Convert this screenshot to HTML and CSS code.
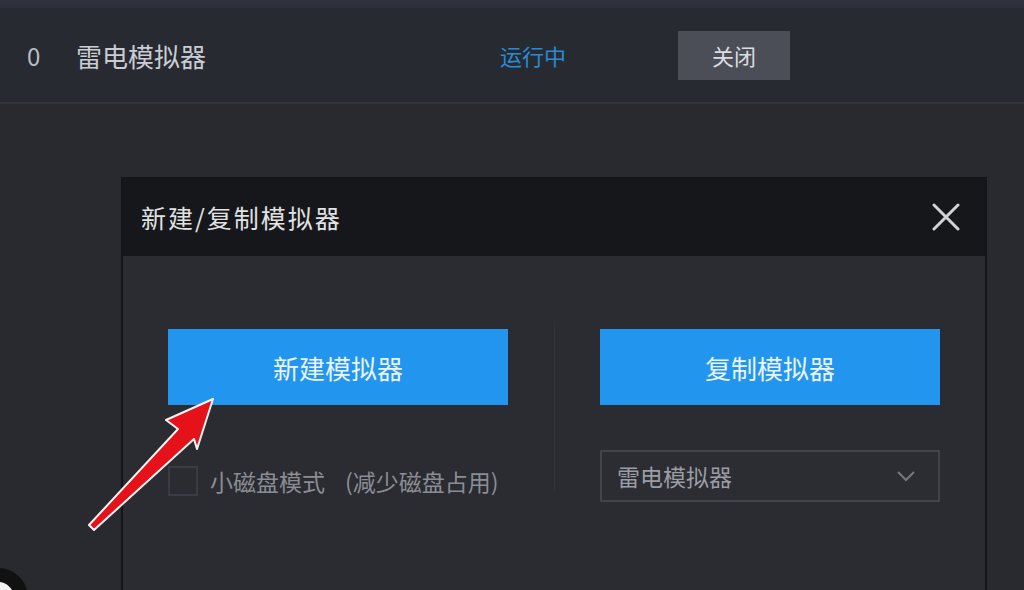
FILE: index.html
```html
<!DOCTYPE html>
<html lang="zh-CN">
<head>
    <meta charset="UTF-8">
    <meta name="viewport" content="width=device-width, initial-scale=1.0">
    <title>多开器</title>

    <link rel="stylesheet" href="styles.css">
</head>
<body>

    <div class="top-strip"></div>

    <div class="sim-row">
        <span class="sim-index">0</span>
        <span class="sim-name">雷电模拟器</span>
        <span class="sim-status">运行中</span>
        <div class="btn-close">关闭</div>
    </div>

    <div class="dialog">
        <div class="dialog-head">
            <p class="dialog-title">新建/复制模拟器</p>
            <svg class="dialog-x" width="28" height="28" viewBox="0 0 28 28">
                <path d="M2 2 L26 26 M26 2 L2 26" stroke="#d2d3d6" stroke-width="3" stroke-linecap="round" fill="none"/>
            </svg>
        </div>
        <div class="dialog-body">
            <div class="dialog-col">
                <div class="btn-blue">新建模拟器</div>
                <label class="check-row">
                    <span class="check-box"></span>
                    <span class="check-text">小磁盘模式</span>
                    <span class="check-note">(减少磁盘占用)</span>
                </label>
            </div>
            <div class="dialog-split"></div>
            <div class="dialog-col">
                <div class="btn-blue">复制模拟器</div>
                <div class="select">
                    <span class="select-text">雷电模拟器</span>
                    <svg class="select-arrow" width="20" height="12" viewBox="0 0 20 12">
                        <path d="M2 2 L10 10 L18 2" stroke="#75787f" stroke-width="2" fill="none"/>
                    </svg>
                </div>
            </div>
        </div>
    </div>

    <!-- pointer arrow drawn over the dialog -->
    <svg class="mark-arrow" width="1024" height="590" viewBox="0 0 1024 590">
        <polygon points="213,399 166,420 178,429 89,525 94,530 194,439 197,449"
                 fill="#e5121a" stroke="#f4f4f4" stroke-width="2" stroke-linejoin="round"/>
    </svg>

    <svg class="corner-badge" width="40" height="30" viewBox="0 0 40 30">
        <circle cx="-2" cy="38" r="23" fill="#f2f2f2" stroke="#111" stroke-width="14"/>
    </svg>

</body>
</html>
```

FILE: styles.css
```css
* {
    padding: 0;
    margin: 0;
    box-sizing: border-box;
}

html {
    font-family: "Noto Sans CJK SC", "Noto Sans", sans-serif;
}

body {
    width: 1024px;
    height: 590px;
    overflow: hidden;
    position: relative;

    background-color: #282a30;
}

.top-strip {
    height: 8px;
    background: linear-gradient(to bottom, #31343f, #2b2e37);
}

.sim-row {
    height: 96px;
    padding-left: 27px;

    display: flex;
    align-items: center;

    background-color: #272a31;
    border-bottom: 2px solid #31343a;
}

.sim-index {
    width: 49px;
    font-size: 24px;
    color: #b9bcc3;
}

.sim-name {
    width: 424px;
    font-size: 26px;
    color: #c9ccd2;
}

.sim-status {
    width: 178px;
    font-size: 22px;
    color: #2b8ad6;
}

.btn-close {
    width: 112px;
    height: 49px;

    display: flex;
    justify-content: center;
    align-items: center;

    background-color: #4b4e56;
    font-size: 22px;
    color: #dcdde0;
}

.dialog {
    width: 866px;
    margin: 73px 0 0 121px;

    border-left: 2px solid #141518;
    border-right: 2px solid #141518;
    border-top: 1px solid #141518;
}

.dialog-head {
    height: 78px;
    padding: 0 25px 0 18px;

    display: flex;
    justify-content: space-between;
    align-items: center;

    background-color: #16171a;
}

.dialog-title {
    font-size: 25px;
    letter-spacing: 2px;
    color: #e1e2e4;
}

.dialog-body {
    height: 340px;
    padding: 73px 45px 0 45px;

    display: flex;

    background-color: #2a2c31;
}

.dialog-col {
    width: 340px;

    display: flex;
    flex-direction: column;
}

.dialog-split {
    width: 1px;
    height: 170px;
    margin: -8px 45px 0 46px;
    background-color: #303238;
}

.btn-blue {
    height: 76px;

    display: flex;
    justify-content: center;
    align-items: center;

    background-color: #2296ee;
    font-size: 26px;
    color: #eaf3fc;
}

.check-row {
    margin-top: 59px;

    display: flex;
    align-items: center;
}

.check-box {
    width: 30px;
    height: 30px;
    margin-right: 12px;

    border: 2px solid #393c44;
}

.check-text,
.check-note {
    font-size: 23px;
    color: #8a8d94;
}

.check-note {
    margin-left: 20px;
}

.select {
    height: 52px;
    margin-top: 45px;
    padding: 0 22px 0 15px;

    display: flex;
    justify-content: space-between;
    align-items: center;

    border: 2px solid #41444c;
    background-color: #2b2d33;
}

.select-text {
    font-size: 23px;
    color: #9a9da3;
}

.mark-arrow {
    position: absolute;
    top: 0;
    left: 0;
}

.corner-badge {
    position: absolute;
    left: 0;
    bottom: 0;
}
```
